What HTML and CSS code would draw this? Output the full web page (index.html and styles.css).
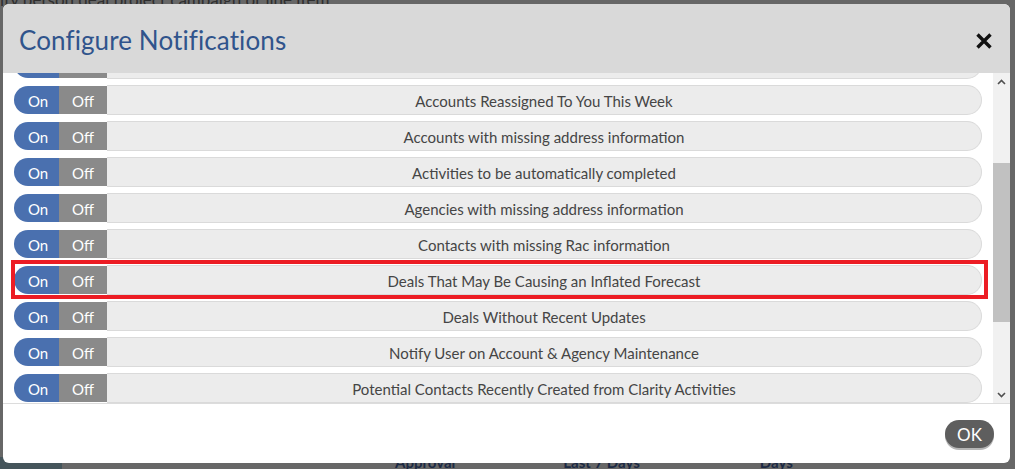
FILE: index.html
```html
<!DOCTYPE html>
<html>
<head>
<meta charset="utf-8">
<link rel="stylesheet" href="styles.css">
</head>
<body>
<div class="page">
  <div class="page-top">ity person deal project campaign or line item</div>
  <div class="page-bottom">
    <span class="pb-side"></span>
    <span class="pb-label pb-a">Approval</span>
    <span class="pb-label pb-b">Last 7 Days</span>
    <span class="pb-label pb-c">Days</span>
  </div>
</div>

<div class="modal">
  <div class="modal-header">
    <h1 class="modal-title">Configure Notifications</h1>
    <svg class="close" width="18" height="18" viewBox="0 0 18 18"><path d="M2.5 2.5 L15.5 15.5 M15.5 2.5 L2.5 15.5" stroke="#111" stroke-width="3.4" stroke-linecap="butt"/></svg>
  </div>
  <div class="modal-body">
    <div class="list">
      <div class="row"><div class="toggle"><span class="on">On</span><span class="off">Off</span></div><div class="label">Accounts You Own</div></div>
      <div class="row"><div class="toggle"><span class="on">On</span><span class="off">Off</span></div><div class="label">Accounts Reassigned To You This Week</div></div>
      <div class="row"><div class="toggle"><span class="on">On</span><span class="off">Off</span></div><div class="label">Accounts with missing address information</div></div>
      <div class="row"><div class="toggle"><span class="on">On</span><span class="off">Off</span></div><div class="label">Activities to be automatically completed</div></div>
      <div class="row"><div class="toggle"><span class="on">On</span><span class="off">Off</span></div><div class="label">Agencies with missing address information</div></div>
      <div class="row"><div class="toggle"><span class="on">On</span><span class="off">Off</span></div><div class="label">Contacts with missing Rac information</div></div>
      <div class="row highlighted"><div class="toggle"><span class="on">On</span><span class="off">Off</span></div><div class="label">Deals That May Be Causing an Inflated Forecast</div></div>
      <div class="row"><div class="toggle"><span class="on">On</span><span class="off">Off</span></div><div class="label">Deals Without Recent Updates</div></div>
      <div class="row"><div class="toggle"><span class="on">On</span><span class="off">Off</span></div><div class="label">Notify User on Account &amp; Agency Maintenance</div></div>
      <div class="row"><div class="toggle"><span class="on">On</span><span class="off">Off</span></div><div class="label">Potential Contacts Recently Created from Clarity Activities</div></div>
    </div>
    <div class="scrollbar">
      <div class="sb-btn"><svg width="9" height="6" viewBox="0 0 9 6"><path d="M1 5 L4.5 1.5 L8 5" fill="none" stroke="#505050" stroke-width="1.6"/></svg></div>
      <div class="sb-track">
        <div class="sb-before"></div>
        <div class="sb-thumb"></div>
        <div class="sb-after"></div>
      </div>
      <div class="sb-btn"><svg width="9" height="6" viewBox="0 0 9 6"><path d="M1 1 L4.5 4.5 L8 1" fill="none" stroke="#505050" stroke-width="1.6"/></svg></div>
    </div>
  </div>
  <div class="modal-footer">
    <button class="ok">OK</button>
  </div>
</div>
</body>
</html>
```

FILE: styles.css
```css
* { box-sizing: border-box; }
html, body { margin: 0; padding: 0; }
body {
  width: 1015px;
  height: 469px;
  overflow: hidden;
  font-family: Lato, "Open Sans", sans-serif;
  background: #666;
  position: relative;
}
.page {
  height: 469px;
  display: flex;
  flex-direction: column;
  justify-content: space-between;
  background: #676767;
}
.page-top {
  margin-top: -9px;
  font-size: 17px;
  color: #2e2e2e;
  line-height: 18px;
  white-space: nowrap;
}
.page-bottom {
  height: 12px;
  display: flex;
  align-items: flex-start;
  overflow: hidden;
}
.pb-side { width: 62px; height: 12px; background: #45555b; }
.pb-label {
  font-size: 15px;
  font-weight: bold;
  color: #1c2a44;
  line-height: 14px;
  margin-top: -2px;
}
.pb-a { margin-left: 333px; }
.pb-b { margin-left: 108px; }
.pb-c { margin-left: 120px; }

.modal {
  position: absolute;
  left: 3px;
  top: 4px;
  width: 1007px;
  height: 459px;
  background: #fff;
  border-radius: 6px;
  overflow: hidden;
  display: flex;
  flex-direction: column;
}
.modal-header {
  height: 69px;
  flex: none;
  background: #d9d9d9;
  display: flex;
  align-items: center;
  justify-content: space-between;
  padding: 0 17px 0 16px;
}
.modal-title {
  margin: 0;
  font-size: 26px;
  font-weight: normal;
  color: #30548c;
  letter-spacing: 0.1px;
  position: relative;
  top: 1px;
}
.close { display: block; position: relative; top: 2px; }

.modal-body {
  height: 330px;
  flex: none;
  display: flex;
}
.list {
  flex: 1;
  overflow: hidden;
  display: flex;
  flex-direction: column;
  justify-content: flex-end;
  gap: 6px;
  padding: 0 11px 0 11px;
}
.row {
  flex: none;
  height: 30px;
  display: flex;
  align-items: center;
  position: relative;
}
.highlighted::after {
  content: "";
  position: absolute;
  left: -3px;
  right: -6px;
  top: -5px;
  bottom: -4px;
  border: 4px solid #ec1c24;
  pointer-events: none;
}
.toggle {
  display: flex;
  height: 28px;
  flex: none;
  font-size: 15px;
  color: #fff;
}
.on {
  width: 45px;
  background: #4a70af;
  border-radius: 14px 0 0 14px;
  display: flex;
  align-items: center;
  justify-content: center;
  padding-left: 3px;
  padding-top: 1px;
}
.off {
  width: 48px;
  background: #8a8a8a;
  display: flex;
  align-items: center;
  justify-content: center;
  padding-top: 1px;
}
.label {
  flex: 1;
  height: 30px;
  background: #ececec;
  border: 1px solid #dadada;
  border-left: none;
  border-radius: 0 15px 15px 0;
  display: flex;
  align-items: center;
  justify-content: center;
  padding-top: 2px;
  font-size: 15px;
  color: #454545;
}

.scrollbar {
  width: 17px;
  flex: none;
  background: #f1f1f1;
  display: flex;
  flex-direction: column;
}
.sb-btn {
  height: 17px;
  flex: none;
  display: flex;
  align-items: center;
  justify-content: center;
}
.sb-track { flex: 1; display: flex; flex-direction: column; }
.sb-before { height: 73px; }
.sb-thumb { height: 159px; background: #c1c1c1; }
.sb-after { flex: 1; }

.modal-footer {
  flex: 1;
  border-top: 1px solid #dcdcdc;
  display: flex;
  justify-content: flex-end;
  align-items: flex-start;
  padding: 16px 16px 0 0;
}
.ok {
  width: 49px;
  height: 28px;
  border: none;
  border-radius: 14px;
  background: #5e5e5e;
  color: #fff;
  font-family: Lato, "Open Sans", sans-serif;
  font-size: 17px;
  padding: 0;
  box-shadow: 0 2px 0 #b5b5b5;
}
```
